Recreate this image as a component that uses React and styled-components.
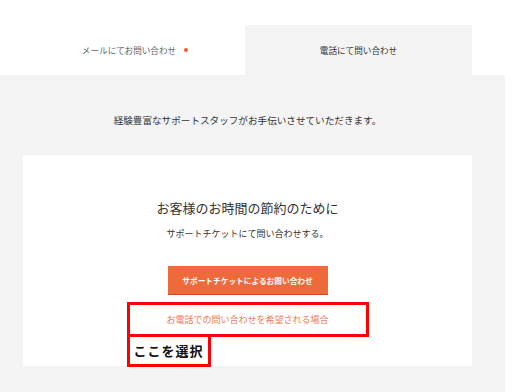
import React from 'react';
import styled, { createGlobalStyle } from 'styled-components';

const GlobalStyle = createGlobalStyle`
  html, body {
    margin: 0;
    padding: 0;
    background: #ffffff;
  }
  body {
    font-family: "Noto Sans CJK JP", "Noto Sans", sans-serif;
    color: #333;
  }
`;

const panelGray = '#f4f4f4';
const accent = '#ef6a3b';

const Page = styled.div`
  width: 505px;
  padding-top: 25px;
`;

const TabBar = styled.div`
  display: flex;
  width: 472px;
  height: 50px;
`;

const Tab = styled.div`
  width: ${(p) => p.$width}px;
  display: flex;
  align-items: center;
  justify-content: center;
  box-sizing: border-box;
  padding-left: ${(p) => p.$offset || 0}px;
  background: ${(p) => (p.$active ? panelGray : '#ffffff')};
  font-size: 8.6px;
  color: ${(p) => (p.$active ? '#333' : '#666')};
  line-height: 1;
`;

const Dot = styled.span`
  width: 4px;
  height: 4px;
  border-radius: 50%;
  background: #f05a28;
  margin-left: 8px;
`;

const Panel = styled.div`
  background: ${panelGray};
  padding: 0 33px 40px 23px;
`;

const Lead = styled.p`
  margin: 0;
  padding: 38px 0 28px;
  text-align: center;
  font-size: 9.6px;
  line-height: 14px;
  color: #333;
`;

const Card = styled.div`
  background: #ffffff;
  padding: 44px 0 29px;
  display: flex;
  flex-direction: column;
  align-items: center;
`;

const Heading = styled.h2`
  margin: 0;
  font-size: 13px;
  font-weight: 400;
  line-height: 18px;
  color: #333;
`;

const SubText = styled.p`
  margin: 10px 0 0;
  font-size: 9px;
  line-height: 14px;
  color: #333;
`;

const PrimaryButton = styled.button`
  margin-top: 25px;
  width: 160px;
  height: 29px;
  border: 0;
  border-bottom: 1px solid #d9401f;
  background: ${accent};
  color: #ffffff;
  font-family: inherit;
  font-size: 7.7px;
  font-weight: 700;
  cursor: pointer;
  padding: 0;
`;

// annotation frame drawn round the phone link
const PhoneLink = styled.a`
  position: relative;
  margin-top: 7px;
  width: 236px;
  height: 29px;
  border: 3px solid #ff0000;
  display: flex;
  align-items: center;
  justify-content: center;
  font-size: 9px;
  color: #f07a54;
  text-decoration: none;
`;

const Callout = styled.span`
  position: absolute;
  top: 100%;
  left: -3px;
  width: 78px;
  height: 27px;
  border: 3px solid #ff0000;
  background: #ffffff;
  display: flex;
  align-items: center;
  justify-content: center;
  font-size: 13px;
  font-weight: 700;
  letter-spacing: 1px;
  color: #111;
`;

export default function App() {
  return (
    <>
      <GlobalStyle />
      <Page>
        <TabBar>
          <Tab $width={245} $offset={25}>
            メールにてお問い合わせ
            <Dot />
          </Tab>
          <Tab $width={227} $active>
            電話にて問い合わせ
          </Tab>
        </TabBar>
        <Panel>
          <Lead>経験豊富なサポートスタッフがお手伝いさせていただきます。</Lead>
          <Card>
            <Heading>お客様のお時間の節約のために</Heading>
            <SubText>サポートチケットにて問い合わせする。</SubText>
            <PrimaryButton>サポートチケットによるお問い合わせ</PrimaryButton>
            <PhoneLink href="#">
              お電話での問い合わせを希望される場合
              <Callout>ここを選択</Callout>
            </PhoneLink>
          </Card>
        </Panel>
      </Page>
    </>
  );
}
